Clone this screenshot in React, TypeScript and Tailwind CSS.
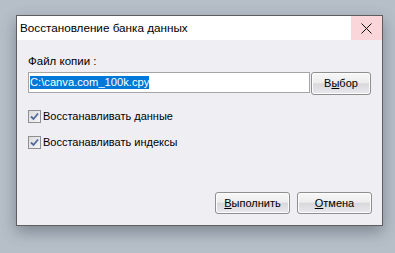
import React from 'react';

const btn =
  'flex items-center justify-center rounded-[3px] border border-[#8e8f8f] bg-[linear-gradient(to_bottom,#f7f7f7_0%,#ededed_45%,#d9d9dc_52%,#e9e9ee_100%)] text-[11px] text-black shadow-[inset_0_0_0_1px_#fcfcfc]';

const Check: React.FC<{ label: string }> = ({ label }) => (
  <div className="flex items-center gap-[2px] h-[14px]">
    <div className="w-[13px] h-[13px] border border-[#8f8f8f] bg-[linear-gradient(135deg,#dcdce0,#f6f6f8)] flex items-center justify-center">
      <svg width="9" height="9" viewBox="0 0 9 9">
        <path d="M1 4.5 L3.5 7 L8 1.5" fill="none" stroke="#52689a" strokeWidth="1.8" />
      </svg>
    </div>
    <span className="text-[11px] text-black leading-[14px]">{label}</span>
  </div>
);

export default function App() {
  return (
    <div
      className="w-[395px] h-[253px] bg-[#b6bec8] pt-[15px] pl-[16px]"
      style={{ fontFamily: '"Liberation Sans", Arial, sans-serif' }}
    >
      <div className="w-[367px] h-[211px] border border-[#5e5e62] bg-[#efeef3] flex flex-col shadow-[0_6px_14px_rgba(60,70,80,0.45)]">
        <div className="h-[24px] bg-white flex items-center justify-between shrink-0">
          <span className="pl-[3px] text-[11.7px] text-black">Восстановление банка данных</span>
          <div className="w-[31px] h-[24px] bg-[#fad5da] flex items-center justify-center">
            <svg width="11" height="11" viewBox="0 0 11 11">
              <path d="M0.5 0.5 L10.5 10.5 M10.5 0.5 L0.5 10.5" stroke="#111" strokeWidth="1" />
            </svg>
          </div>
        </div>

        <div className="flex flex-col pl-[11px] pr-[10px] flex-1">
          <div className="mt-[14px] text-[11.5px] leading-[14px] text-black">Файл копии :</div>
          <div className="flex items-start gap-[1px] mt-[4px]">
            <div className="w-[282px] h-[21px] border border-[#a5a5a8] bg-white flex items-center pl-[1px]">
              <span className="bg-[#0078d7] text-white text-[11.2px] leading-[13px]">C:\canva.com_100k.cpy</span>
            </div>
            <button className={`${btn} w-[60px] h-[23px]`}>
              В<span className="underline">ы</span>бор
            </button>
          </div>

          <div className="mt-[14px] flex flex-col gap-[12px]">
            <Check label="Восстанавливать данные" />
            <Check label="Восстанавливать индексы" />
          </div>

          <div className="flex justify-end gap-[7px] mt-auto mb-[11px]">
            <button className={`${btn} w-[75px] h-[22px]`}>
              <span className="underline">В</span>ыполнить
            </button>
            <button className={`${btn} w-[75px] h-[22px]`}>
              <span className="underline">О</span>тмена
            </button>
          </div>
        </div>
      </div>
    </div>
  );
}
